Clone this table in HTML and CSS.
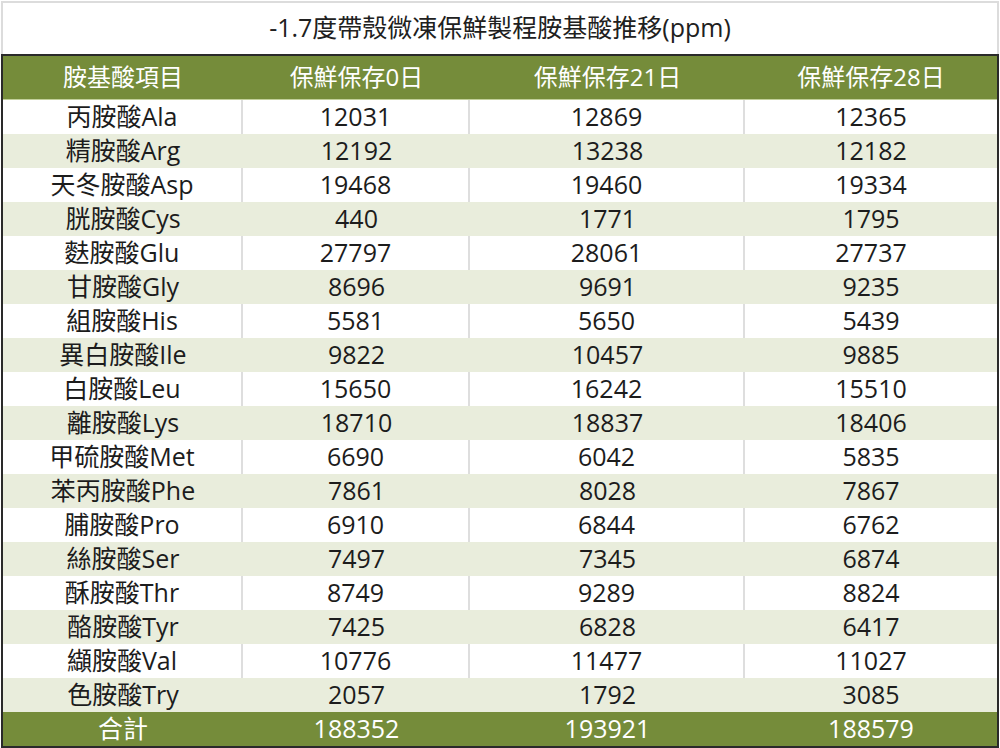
FILE: index.html
```html
<!DOCTYPE html>
<html lang="zh-Hant">
<head>
<meta charset="utf-8">
<title>胺基酸推移</title>
<link rel="stylesheet" href="styles.css">
</head>
<body>
<div class="page">
  <div class="title">-1.7度帶殼微凍保鮮製程胺基酸推移(ppm)</div>
  <div class="table">
    <div class="row head"><div class="c">胺基酸項目</div><div class="c">保鮮保存0日</div><div class="c">保鮮保存21日</div><div class="c">保鮮保存28日</div></div>
    <div class="row"><div class="c">丙胺酸Ala</div><div class="c">12031</div><div class="c">12869</div><div class="c">12365</div></div>
    <div class="row alt"><div class="c">精胺酸Arg</div><div class="c">12192</div><div class="c">13238</div><div class="c">12182</div></div>
    <div class="row"><div class="c">天冬胺酸Asp</div><div class="c">19468</div><div class="c">19460</div><div class="c">19334</div></div>
    <div class="row alt"><div class="c">胱胺酸Cys</div><div class="c">440</div><div class="c">1771</div><div class="c">1795</div></div>
    <div class="row"><div class="c">麩胺酸Glu</div><div class="c">27797</div><div class="c">28061</div><div class="c">27737</div></div>
    <div class="row alt"><div class="c">甘胺酸Gly</div><div class="c">8696</div><div class="c">9691</div><div class="c">9235</div></div>
    <div class="row"><div class="c">組胺酸His</div><div class="c">5581</div><div class="c">5650</div><div class="c">5439</div></div>
    <div class="row alt"><div class="c">異白胺酸Ile</div><div class="c">9822</div><div class="c">10457</div><div class="c">9885</div></div>
    <div class="row"><div class="c">白胺酸Leu</div><div class="c">15650</div><div class="c">16242</div><div class="c">15510</div></div>
    <div class="row alt"><div class="c">離胺酸Lys</div><div class="c">18710</div><div class="c">18837</div><div class="c">18406</div></div>
    <div class="row"><div class="c">甲硫胺酸Met</div><div class="c">6690</div><div class="c">6042</div><div class="c">5835</div></div>
    <div class="row alt"><div class="c">苯丙胺酸Phe</div><div class="c">7861</div><div class="c">8028</div><div class="c">7867</div></div>
    <div class="row"><div class="c">脯胺酸Pro</div><div class="c">6910</div><div class="c">6844</div><div class="c">6762</div></div>
    <div class="row alt"><div class="c">絲胺酸Ser</div><div class="c">7497</div><div class="c">7345</div><div class="c">6874</div></div>
    <div class="row"><div class="c">酥胺酸Thr</div><div class="c">8749</div><div class="c">9289</div><div class="c">8824</div></div>
    <div class="row alt"><div class="c">酪胺酸Tyr</div><div class="c">7425</div><div class="c">6828</div><div class="c">6417</div></div>
    <div class="row"><div class="c">纈胺酸Val</div><div class="c">10776</div><div class="c">11477</div><div class="c">11027</div></div>
    <div class="row alt"><div class="c">色胺酸Try</div><div class="c">2057</div><div class="c">1792</div><div class="c">3085</div></div>
    <div class="row total"><div class="c">合計</div><div class="c">188352</div><div class="c">193921</div><div class="c">188579</div></div>
  </div>
</div>
</body>
</html>
```

FILE: styles.css
```css
html, body {
  margin: 0;
  padding: 0;
  background: #ffffff;
}
.page {
  width: 1000px;
  height: 748px;
  font-family: "Open Sans", "Noto Sans CJK TC", sans-serif;
  color: #1c1c1c;
  overflow: hidden;
}
.title {
  box-sizing: border-box;
  height: 54px;
  margin: 1px 1px 0 1px;
  border: 2px solid #dcdcdc;
  border-bottom: none;
  display: flex;
  align-items: center;
  justify-content: center;
  font-size: 25px;
  line-height: 1;
  color: #202020;
  padding-bottom: 3px;
}
.table {
  box-sizing: border-box;
  width: 998px;
  margin: -1px 0 0 1px;
  border: 2px solid #2a2a2a;
}
.row {
  display: grid;
  grid-template-columns: 240px 227px 275px 252px;
  height: 34px;
  font-size: 25px;
  background: #ffffff;
}
.row .c {
  display: flex;
  align-items: center;
  justify-content: center;
  line-height: 1;
  box-sizing: border-box;
  padding-bottom: 1px;
}
.row:not(.alt):not(.head):not(.total) .c:not(:last-child) {
  border-right: 2px solid #dedede;
}
.row.alt {
  background: #e9eddc;
}
.row.head {
  height: 44px;
  background: #758c3a;
  color: #ffffff;
  font-size: 24px;
  border-bottom: 1px solid #c2d09a;
  box-sizing: border-box;
}
.row.total {
  background: #758c3a;
  color: #ffffff;
}
```
